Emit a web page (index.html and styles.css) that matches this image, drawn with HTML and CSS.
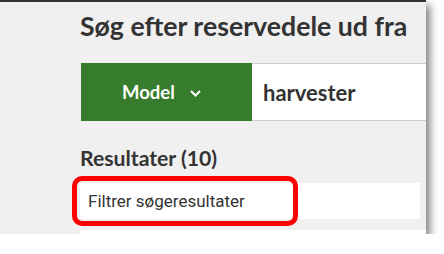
FILE: index.html
```html
<!DOCTYPE html>
<html lang="da">
<head>
<meta charset="utf-8">
<title>Søg efter reservedele</title>
<link rel="stylesheet" href="styles.css">
</head>
<body>
<div class="panel">
  <h1 class="title">Søg efter reservedele ud fra</h1>
  <div class="search">
    <button class="model-btn" type="button">
      <span>Model</span>
      <svg class="chev" width="11" height="7" viewBox="0 0 11 7"><path d="M1 1 L5.5 5.5 L10 1" fill="none" stroke="#fff" stroke-width="2"/></svg>
    </button>
    <div class="search-input">harvester</div>
  </div>
  <h2 class="results">Resultater (10)</h2>
  <div class="filter-wrap">
    <div class="filter">Filtrer søgeresultater</div>
    <div class="highlight"></div>
  </div>
  <div class="next-card"></div>
</div>
</body>
</html>
```

FILE: styles.css
```css
html, body {
  margin: 0;
  padding: 0;
  background: #ffffff;
}

.panel {
  box-sizing: border-box;
  width: 426px;
  height: 234px;
  background: #f0f0f0;
  border-top: 2px solid #333333;
  box-shadow: 4px 5px 8px rgba(0, 0, 0, 0.5);
  overflow: hidden;
  padding: 8px 0 0 80px;
  color: #333333;
}

.title {
  margin: 0;
  font-family: Lato, sans-serif;
  font-weight: 700;
  font-size: 26.7px;
  line-height: 32px;
  white-space: nowrap;
  color: #333333;
}

.search {
  display: flex;
  margin-top: 21px;
  height: 58px;
  width: 360px;
}

.model-btn {
  box-sizing: border-box;
  width: 171px;
  flex: none;
  height: 58px;
  margin: 0 0 0 1px;
  border: 0;
  background: #377c2c;
  color: #ffffff;
  display: flex;
  align-items: center;
  gap: 15px;
  padding: 0 0 0 41px;
  font-family: Lato, sans-serif;
  font-weight: 700;
  font-size: 18.5px;
}

.chev {
  display: block;
  margin-top: 2px;
}

.search-input {
  box-sizing: border-box;
  flex: 1;
  height: 58px;
  background: #ffffff;
  border-top: 1px solid #cccccc;
  border-bottom: 1px solid #cccccc;
  padding-left: 11px;
  display: flex;
  align-items: center;
  font-family: Lato, sans-serif;
  font-weight: 700;
  font-size: 22px;
  color: #333333;
}

.results {
  margin: 23px 0 0 0;
  font-family: Lato, sans-serif;
  font-weight: 700;
  font-size: 21.2px;
  line-height: 28px;
  color: #333333;
}

.filter-wrap {
  position: relative;
  margin-top: 11px;
  width: 340px;
}

.filter {
  height: 36px;
  line-height: 36px;
  background: #ffffff;
  padding-left: 8px;
  font-family: Roboto, sans-serif;
  font-size: 17px;
  color: #333333;
}

.highlight {
  position: absolute;
  left: -8px;
  top: -7px;
  width: 216px;
  height: 40px;
  border: 5px solid #ff0000;
  border-radius: 10px;
}

.next-card {
  margin-top: 11px;
  height: 20px;
  width: 360px;
  background: #ffffff;
}
```
